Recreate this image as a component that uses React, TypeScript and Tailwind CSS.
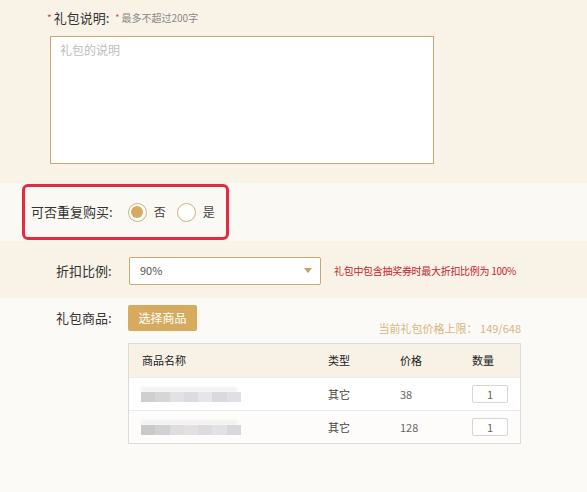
import React from "react";

const font = { fontFamily: '"Noto Sans CJK SC", "Noto Sans", sans-serif' };

const Radio = ({ checked, label }: { checked?: boolean; label: string }) => (
  <label className="flex items-center">
    <span className="flex h-[19px] w-[19px] items-center justify-center rounded-full border border-[#d2b07a] bg-white">
      {checked && <span className="h-[12px] w-[12px] rounded-full bg-[#d6ab5f]" />}
    </span>
    <span className="ml-[7px] text-[12px] leading-[16px] text-[#444]">{label}</span>
  </label>
);

const BlurName = ({ variant }: { variant: number }) => {
  const shades =
    variant === 0
      ? ["#cfcfcf", "#d6d6d6", "#e2e2e6", "#dcdce0", "#e6e6e8", "#dadade", "#e0e0e2"]
      : ["#c9c9c9", "#d1d1d1", "#dedee0", "#e4e0e0", "#dcdcde", "#e2e2e4", "#d8d8da"];
  return (
    <div className="w-[100px]">
      <div className="h-[5px] w-[96px] bg-[#f1f1f1] blur-[1px]" />
      <div className="flex h-[10px] w-[100px] blur-[0.6px]">
        {shades.map((c, i) => (
          <div key={i} className="h-full flex-1" style={{ backgroundColor: c }} />
        ))}
      </div>
    </div>
  );
};

const rows = [
  { type: "其它", price: "38", qty: "1" },
  { type: "其它", price: "128", qty: "1" },
];

export default function App() {
  return (
    <div className="h-[492px] w-[587px] overflow-hidden bg-[#fcfaf6] text-[#333]" style={font}>
      {/* description */}
      <section className="h-[183px] bg-[#f8f2e7] pt-[10px]">
        <div className="flex items-center pl-[47px] leading-[16px]">
          <span className="mr-[2px] text-[10px] text-[#e0424a]">*</span>
          <span className="text-[13px] text-[#333]">礼包说明:</span>
          <span className="ml-[6px] mr-[2px] text-[9px] text-[#e0424a]">*</span>
          <span className="text-[10px] text-[#888]">最多不超过200字</span>
        </div>
        <div className="mt-[10px] pl-[50px]">
          <textarea
            placeholder="礼包的说明"
            className="block h-[128px] w-[384px] resize-none border border-[#c9a771] bg-white px-[9px] py-[4px] text-[12px] leading-[18px] outline-none placeholder:text-[#bdbdbd]"
          />
        </div>
      </section>

      {/* repeat purchase */}
      <section className="h-[58px] bg-[#fbf9f4] pl-[22px] pt-[1px]">
        <div className="flex h-[56px] w-[207px] items-center rounded-[6px] border-[3px] border-[#e32a3e] pl-[6px]">
          <span className="text-[13px] leading-[16px] text-[#333]">可否重复购买:</span>
          <div className="ml-[15px] flex items-center gap-[11px]">
            <Radio checked label="否" />
            <Radio label="是" />
          </div>
        </div>
      </section>

      {/* discount */}
      <section className="flex h-[57px] items-center bg-[#f8f2e7] pl-[56px] pt-[2px]">
        <span className="w-[73px] text-[13px] leading-[16px] text-[#333]">折扣比例:</span>
        <div className="flex h-[28px] w-[192px] items-center justify-between rounded-[2px] border border-[#c9a771] bg-white pl-[10px] pr-[8px]">
          <span className="text-[11px] text-[#555]">90%</span>
          <span className="h-0 w-0 border-x-[4px] border-t-[5px] border-x-transparent border-t-[#c6a26a]" />
        </div>
        <span className="ml-[13px] text-[10px] tracking-[-0.3px] text-[#c8242c]">
          礼包中包含抽奖券时最大折扣比例为 100%
        </span>
      </section>

      {/* products */}
      <section className="flex pl-[56px] pt-[7px]">
        <span className="w-[72px] text-[13px] leading-[26px] text-[#333]">礼包商品:</span>
        <div className="w-[393px]">
          <div className="flex items-end justify-between">
            <button className="h-[26px] w-[69px] rounded-[2px] bg-[#d6ab5e] text-[12px] text-white">
              选择商品
            </button>
            <span className="mb-[-4px] text-[11px] leading-[14px] text-[#d8b67f]">
              当前礼包价格上限： 149/648
            </span>
          </div>
          <div className="mt-[12px] border border-[#dcdcdc] text-[11px]">
            <div className="grid h-[33px] grid-cols-[199px_72px_72px_1fr] items-center bg-[#f8f1e6] text-[#222]">
              <span className="pl-[13px]">商品名称</span>
              <span>类型</span>
              <span>价格</span>
              <span>数量</span>
            </div>
            {rows.map((r, i) => (
              <div
                key={i}
                className={`grid h-[33px] grid-cols-[199px_72px_72px_1fr] items-center border-t border-[#ececec] ${
                  i === 0 ? "bg-white" : "bg-[#fdfcfa]"
                }`}
              >
                <span className="pl-[12px]">
                  <BlurName variant={i} />
                </span>
                <span className="text-[#444]">{r.type}</span>
                <span className="text-[#666]">{r.price}</span>
                <span>
                  <span className="flex h-[18px] w-[36px] items-center justify-center rounded-[2px] border border-[#d6d6d6] bg-white text-[11px] text-[#666]">
                    {r.qty}
                  </span>
                </span>
              </div>
            ))}
          </div>
        </div>
      </section>
    </div>
  );
}
